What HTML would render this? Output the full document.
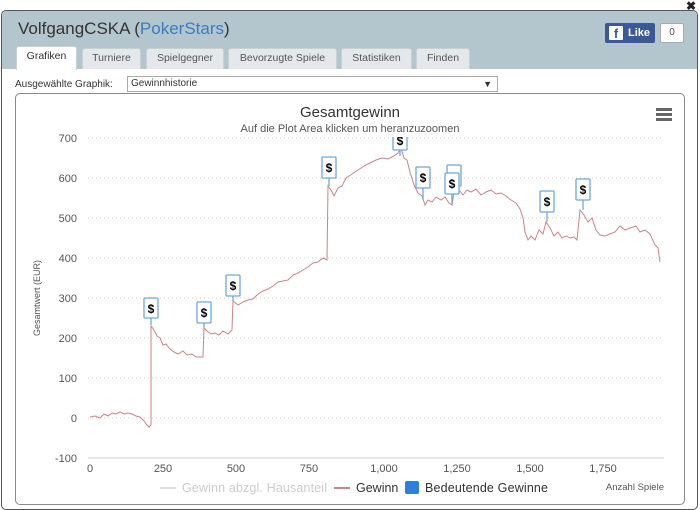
<!DOCTYPE html>
<html><head><meta charset="utf-8"><style>
*{margin:0;padding:0;box-sizing:border-box}
body{width:700px;height:506px;background:#fff;font-family:"Liberation Sans",sans-serif;position:relative;overflow:hidden}
.win{position:absolute;left:1px;top:10px;width:697px;height:500px;border:1px solid #555;border-radius:5px;background:#fff;overflow:hidden}
.hdr{position:absolute;left:0;top:0;width:100%;height:58px;background:#b3c6cd}
.title{position:absolute;left:16px;top:8px;font-size:17px;color:#333}
.title span{color:#3a7bbf}
.tabs{position:absolute;left:14px;top:35px;height:23px}
.tab{position:absolute;top:2px;height:21px;background:#e4e8ea;border:1px solid #c8d0d3;border-bottom:none;border-radius:3px 3px 0 0;font-size:10.5px;color:#555;text-align:center;line-height:19px}
.tab.a{top:0;height:24px;background:#fff;color:#333}
.fb{position:absolute;left:603px;top:12px;width:50px;height:20px;background:#3b5998;border-radius:2px;color:#fff;font-weight:bold;font-size:11px;line-height:20px}
.fb i{position:absolute;left:4px;top:3px;width:14px;height:14px;background:#fff;color:#3b5998;font-style:normal;font-size:13px;line-height:16px;text-align:center;border-radius:1px}
.fb b{position:absolute;left:23px}
.cnt{position:absolute;left:658px;top:12px;width:24px;height:20px;border:1px solid #aaa;background:#fff;font-size:10px;color:#555;text-align:center;line-height:18px;border-radius:2px}
.x{position:absolute;left:686px;top:-1px;font-size:12px;font-weight:bold;color:#222}
.lbl{position:absolute;left:15px;top:79px;font-size:10px;color:#333}
.sel{position:absolute;left:127px;top:76px;width:371px;height:16px;border:1px solid #aaa;font-size:10px;color:#333;padding-left:3px;line-height:14px}
.sel span{position:absolute;right:5px;top:0;font-size:9px}
.chart{position:absolute;left:15px;top:93px;width:670px;height:412px;border:1px solid #888;border-radius:5px;background:#fff}
</style></head><body>
<div class="x">✖</div>
<div class="win">
<div class="hdr">
<div class="title">VolfgangCSKA (<span>PokerStars</span>)</div>
<div class="tabs">
<div class="tab a" style="left:0;width:61px">Grafiken</div>
<div class="tab" style="left:66px;width:59px">Turniere</div>
<div class="tab" style="left:130px;width:78px">Spielgegner</div>
<div class="tab" style="left:212px;width:109px">Bevorzugte Spiele</div>
<div class="tab" style="left:325px;width:71px">Statistiken</div>
<div class="tab" style="left:400px;width:54px">Finden</div>
</div>
<div class="fb"><i>f</i><b>Like</b></div>
<div class="cnt">0</div>
</div>
</div>
<div class="lbl">Ausgewählte Graphik:</div>
<div class="sel">Gewinnhistorie<span>▼</span></div>
<div class="chart"></div>
<svg style="position:absolute;left:0;top:0" width="700" height="506" font-family="Liberation Sans,sans-serif">
<defs><clipPath id="pc"><rect x="80" y="137" width="600" height="330"/></clipPath></defs>
<text x="350" y="117" font-size="15" fill="#333" text-anchor="middle">Gesamtgewinn</text>
<text x="350" y="132" font-size="11" fill="#555" text-anchor="middle">Auf die Plot Area klicken um heranzuzoomen</text>
<g fill="#666"><rect x="656" y="108" width="16" height="3"/><rect x="656" y="113" width="16" height="3"/><rect x="656" y="118" width="16" height="3"/></g>
<g stroke="#ccc" stroke-dasharray="1,3">
<line x1="88" x2="664" y1="138" y2="138"/><line x1="88" x2="664" y1="178" y2="178"/><line x1="88" x2="664" y1="218" y2="218"/><line x1="88" x2="664" y1="258" y2="258"/><line x1="88" x2="664" y1="298" y2="298"/><line x1="88" x2="664" y1="338" y2="338"/><line x1="88" x2="664" y1="378" y2="378"/><line x1="88" x2="664" y1="418" y2="418"/>
</g>
<line x1="88" x2="664" y1="458" y2="458" stroke="#ccc"/>
<g font-size="11" fill="#555" text-anchor="end">
<text x="77" y="142">700</text><text x="77" y="182">600</text><text x="77" y="222">500</text><text x="77" y="262">400</text><text x="77" y="302">300</text><text x="77" y="342">200</text><text x="77" y="382">100</text><text x="77" y="422">0</text><text x="77" y="462">-100</text>
</g>
<g font-size="11" fill="#555" text-anchor="middle">
<text x="90" y="472">0</text><text x="163" y="472">250</text><text x="236" y="472">500</text><text x="309" y="472">750</text><text x="384" y="472">1,000</text><text x="457" y="472">1,250</text><text x="530" y="472">1,500</text><text x="603" y="472">1,750</text>
</g>
<text transform="translate(40,298) rotate(-90)" font-size="9" fill="#555" text-anchor="middle">Gesamtwert (EUR)</text>
<polyline fill="none" stroke="#c98585" stroke-width="1" points="90,417 95,416 100,418 104,414 108,416 112,413 116,414 120,412 124,414 128,413 132,414 136,416 140,417 144,421 147,425 149,427 151,425 151,326 154,330 157,336 160,338 163,345 166,344 170,349 174,352 178,354 183,351 187,355 192,354 196,357 203,357 204,328 207,331 211,334 215,333 219,335 223,331 228,334 232,330 233,301 238,305 243,302 248,300 253,299 258,294 263,291 268,289 273,286 278,282 283,281 288,280 293,275 298,273 303,270 308,267 313,263 318,262 323,258 327,260 328,186 331,190 334,196 338,188 342,186 346,178 352,174 358,170 364,166 370,163 376,160 382,158 388,159 394,156 398,153 401,148 404,158 407,160 410,172 414,185 418,193 422,196 425,205 428,200 432,202 436,197 441,200 445,197 449,203 452,205 454,192 459,190 463,195 467,190 471,192 476,189 481,195 486,192 491,190 496,194 501,193 506,196 511,200 516,203 520,209 523,218 525,232 528,240 531,236 535,240 539,230 543,234 546,222 550,228 554,236 558,232 562,238 566,236 570,238 574,237 577,240 580,210 584,215 588,222 592,218 596,230 600,235 605,236 610,234 615,232 620,226 625,230 630,228 636,226 640,232 645,230 650,234 655,245 658,248 660,262"/>
<g clip-path="url(#pc)">
<g stroke="#6fa8dc" fill="#fff" stroke-width="1.3">
<line x1="151" y1="318" x2="151" y2="325"/><rect x="144" y="298" width="14" height="20" rx="1"/>
<line x1="204" y1="323" x2="204" y2="328"/><rect x="197" y="302" width="14" height="21" rx="1"/>
<line x1="233" y1="296" x2="233" y2="301"/><rect x="226" y="275" width="14" height="21" rx="1"/>
<line x1="329" y1="178" x2="329" y2="186"/><rect x="322" y="157" width="14" height="21" rx="1"/>
<line x1="400" y1="150" x2="400" y2="156"/><rect x="393" y="130" width="14" height="20" rx="1"/>
<line x1="423" y1="188" x2="423" y2="200"/><rect x="416" y="167" width="14" height="21" rx="1"/>
<rect x="447" y="165" width="14" height="21" rx="1"/>
<line x1="452" y1="194" x2="452" y2="205"/><rect x="445" y="173" width="14" height="21" rx="1"/>
<line x1="547" y1="212" x2="547" y2="222"/><rect x="540" y="191" width="14" height="21" rx="1"/>
<line x1="583" y1="200" x2="583" y2="210"/><rect x="576" y="179" width="14" height="21" rx="1"/>
</g>
<g font-size="12" font-weight="bold" fill="#000" text-anchor="middle">
<text x="151" y="313">$</text><text x="204" y="317">$</text><text x="233" y="290">$</text><text x="329" y="172">$</text><text x="400" y="145">$</text><text x="423" y="182">$</text><text x="452" y="188">$</text><text x="547" y="206">$</text><text x="583" y="194">$</text>
</g>
</g>
<line x1="160" y1="488" x2="176" y2="488" stroke="#ddd" stroke-width="2"/>
<text x="182" y="492" font-size="12.5" fill="#ccc" textLength="145">Gewinn abzgl. Hausanteil</text>
<line x1="334" y1="488" x2="350" y2="488" stroke="#c98585" stroke-width="2"/>
<text x="356" y="492" font-size="12.5" fill="#333">Gewinn</text>
<rect x="405" y="481" width="14" height="13" rx="2" fill="#2f7ed8"/>
<text x="425" y="492" font-size="12.5" fill="#333" textLength="123">Bedeutende Gewinne</text>
<text x="664" y="490" font-size="9.5" fill="#555" text-anchor="end">Anzahl Spiele</text>
</svg>
</body></html>
